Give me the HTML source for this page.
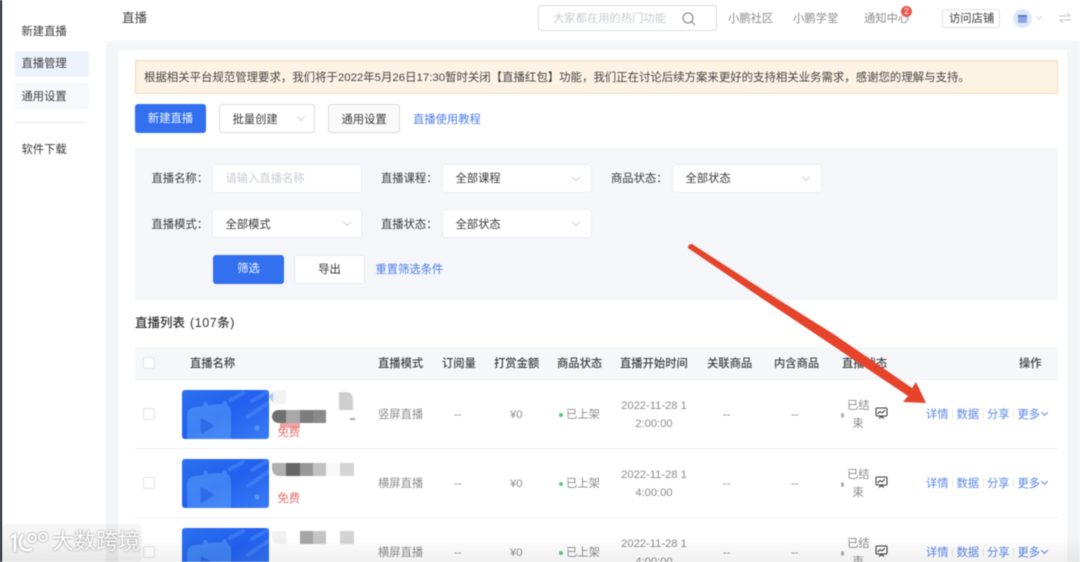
<!DOCTYPE html>
<html lang="zh"><head><meta charset="utf-8"><title>直播</title>
<style>
*{box-sizing:border-box}
html,body{margin:0;padding:0;background:#fff}
body{width:1080px;height:562px;overflow:hidden;position:relative;font-family:"Liberation Sans","Noto Sans CJK SC",sans-serif;font-size:11.3px;color:#555}
#p{position:absolute;left:0;top:0;width:1080px;height:562px;overflow:hidden;filter:blur(.4px)}
.a,.t{position:absolute}
.t{white-space:nowrap;line-height:16px;height:16px;margin-top:1px}
.b{color:#3a3a3a}.g{color:#8c8c8c}.l{color:#5b86e5}.ph{color:#c9ccd1}
.c{text-align:center}
.box{position:absolute;background:#fff;border:1px solid #e4e6ea;border-radius:3px}
.chev{position:absolute;width:6px;height:6px;border-right:1px solid #d0d3d8;border-bottom:1px solid #d0d3d8;transform:rotate(45deg)}
.cb{position:absolute;left:143px;width:12px;height:12px;border:1px solid #e1e3e6;border-radius:2px;background:#fff}
.row{position:absolute;left:135px;width:923px;height:69px;border-bottom:1px solid #eef0f2}
.r{position:absolute;left:0;width:1080px;height:69px}
.th{position:absolute;top:356px;font-weight:500;color:#3c3f44;white-space:nowrap;line-height:16px}
.s{position:absolute;background:#999}
</style></head><body><div id="p">

<!-- left edge + sidebar -->
<div class="a" style="left:0;top:0;width:2px;height:562px;background:#141929"></div>
<div class="a" style="left:106px;top:41px;width:974px;height:521px;background:#f4f5f6"></div>
<div class="a" style="left:118px;top:50px;width:940px;height:512px;background:#fff"></div>
<div class="a" style="left:1058px;top:50px;width:9px;height:512px;background:#fff"></div>

<div class="t b" style="left:21.5px;top:23px">新建直播</div>
<div class="a" style="left:15px;top:51px;width:74px;height:26px;background:#edf2fc;border-radius:3px"></div>
<div class="t b" style="left:21.5px;top:55px">直播管理</div>
<div class="a" style="left:15px;top:83px;width:74px;height:26px;background:#f7f9fd;border-radius:3px"></div>
<div class="t b" style="left:21.5px;top:88px">通用设置</div>
<div class="a" style="left:15px;top:122px;width:71px;height:1px;background:#e9eaec"></div>
<div class="t b" style="left:21.5px;top:141px">软件下载</div>

<!-- top bar -->
<div class="t" style="left:122px;top:9px;font-size:12.5px;color:#444">直播</div>
<div class="box" style="left:538px;top:5px;width:179px;height:26px;border-color:#d9dbdf"></div>
<div class="t ph" style="left:553px;top:10px">大家都在用的热门功能</div>
<svg class="a" style="left:681px;top:11px" width="16" height="16" viewBox="0 0 16 16" fill="none" stroke="#777" stroke-width="1"><circle cx="7" cy="7" r="5"/><path d="M10.8 10.8L14 14"/></svg>
<div class="t g" style="left:728px;top:10px">小鹏社区</div>
<div class="a" style="left:767px;top:14px;width:1px;height:9px;background:#e8e8e8"></div>
<div class="t g" style="left:793px;top:10px">小鹏学堂</div>
<div class="a" style="left:828px;top:14px;width:1px;height:9px;background:#e8e8e8"></div>
<div class="t g" style="left:864px;top:10px">通知中心</div>
<div class="a c" style="left:901px;top:6px;width:11px;height:11px;border-radius:50%;background:#e4574c;color:#fff;font-size:8.5px;line-height:11px">2</div>
<div class="box" style="left:942px;top:9px;width:58px;height:19px;border-color:#dfe1e4"></div>
<div class="t b" style="left:949px;top:10px">访问店铺</div>
<div class="a" style="left:1013px;top:9px;width:19px;height:19px;border-radius:50%;background:#dfe8fb"></div>
<div class="a" style="left:1018px;top:15px;width:9px;height:8px;background:#8aa8e8;border-radius:1px"></div>
<div class="a" style="left:1018px;top:15px;width:9px;height:2px;background:#5678c8"></div>
<div class="chev" style="left:1037px;top:15px;width:4px;height:4px"></div>
<svg class="a" style="left:1058px;top:11px" width="14" height="14" viewBox="0 0 14 14" fill="none" stroke="#c4c6ca"><path d="M1 5h11L9 2M13 9H2l3 3"/></svg>

<!-- notice -->
<div class="a" style="left:135px;top:60px;width:923px;height:34px;background:#fdf3e5;border:1px solid #f3d9b3;border-radius:2px"></div>
<div class="t" style="left:144px;top:69px;color:#444;font-size:11.42px">根据相关平台规范管理要求，我们将于2022年5月26日17:30暂时关闭【直播红包】功能，我们正在讨论后续方案来更好的支持相关业务需求，感谢您的理解与支持。</div>

<!-- action buttons -->
<div class="a c" style="left:135px;top:104px;width:71px;height:29px;background:#3270f0;border-radius:3px;color:#f4f7ff;line-height:30px">新建直播</div>
<div class="box" style="left:219px;top:104px;width:96px;height:29px;border-color:#d9dbdf"></div>
<div class="t b" style="left:232.5px;top:111px">批量创建</div>
<div class="chev" style="left:298px;top:114px"></div>
<div class="box" style="left:328px;top:104px;width:72px;height:29px;border-color:#d9dbdf;background:#fafafa"></div>
<div class="t b" style="left:341.5px;top:111px">通用设置</div>
<div class="t l" style="left:413px;top:111px;color:#4d7fe6">直播使用教程</div>

<!-- filter -->
<div class="a" style="left:135px;top:148px;width:923px;height:152px;background:#f4f6f9"></div>
<div class="t b" style="left:151.5px;top:170px">直播名称：</div>
<div class="box" style="left:212px;top:164px;width:150px;height:29px;border-color:#eceef1"></div>
<div class="t ph" style="left:225.5px;top:170px">请输入直播名称</div>
<div class="t b" style="left:381px;top:170px">直播课程：</div>
<div class="box" style="left:442px;top:164px;width:150px;height:29px;border-color:#eceef1"></div>
<div class="t b" style="left:455.5px;top:170px">全部课程</div>
<div class="chev" style="left:573px;top:174px"></div>
<div class="t b" style="left:611px;top:170px">商品状态：</div>
<div class="box" style="left:672px;top:164px;width:150px;height:29px;border-color:#eceef1"></div>
<div class="t b" style="left:685.5px;top:170px">全部状态</div>
<div class="chev" style="left:803px;top:174px"></div>

<div class="t b" style="left:151.5px;top:216px">直播模式：</div>
<div class="box" style="left:212px;top:209px;width:150px;height:29px;border-color:#eceef1"></div>
<div class="t b" style="left:225.5px;top:216px">全部模式</div>
<div class="chev" style="left:344px;top:219px"></div>
<div class="t b" style="left:381px;top:216px">直播状态：</div>
<div class="box" style="left:442px;top:209px;width:150px;height:29px;border-color:#eceef1"></div>
<div class="t b" style="left:455.5px;top:216px">全部状态</div>
<div class="chev" style="left:573px;top:219px"></div>

<div class="a c" style="left:213px;top:255px;width:71px;height:29px;background:#3270f0;border-radius:3px;color:#f4f7ff;line-height:29px">筛选</div>
<div class="box c" style="left:294px;top:255px;width:71px;height:29px;line-height:28px;color:#333;border-color:#e6e8eb">导出</div>
<div class="t l" style="left:375.5px;top:261px;color:#4d7fe6">重置筛选条件</div>

<div class="t" style="left:135px;top:314px;font-size:12.5px;color:#333;font-weight:500">直播列表<span style="margin-left:5px;letter-spacing:.55px">(107条)</span></div>

<!-- table header -->
<div class="a" style="left:135px;top:347px;width:923px;height:33px;background:#f6f7f9;border-bottom:1px solid #eef0f2"></div>
<div class="cb" style="top:357px"></div>
<div class="th" style="left:190px">直播名称</div>
<div class="th" style="left:378px">直播模式</div>
<div class="th" style="left:442px">订阅量</div>
<div class="th" style="left:494px">打赏金额</div>
<div class="th" style="left:557px">商品状态</div>
<div class="th" style="left:620px">直播开始时间</div>
<div class="th" style="left:707px">关联商品</div>
<div class="th" style="left:774px">内含商品</div>
<div class="th" style="left:842px">直播状态</div>
<div class="th" style="left:1019px">操作</div>

<!-- row 1 -->
<div class="r" style="top:380px">
  <div class="row" style="top:0"></div>
  <div class="cb" style="top:28px"></div>
  <svg class="a" style="left:182px;top:10px" width="87" height="49" viewBox="0 0 87 49"><defs><linearGradient id="g1" x1="0" y1="0" x2="1" y2="1"><stop offset="0" stop-color="#2b70ee"/><stop offset=".5" stop-color="#2260ef"/><stop offset="1" stop-color="#3a7cf5"/></linearGradient></defs><rect width="87" height="49" rx="3" fill="url(#g1)"/><path d="M5 49V26q0-8 8-9l8-1 1-4 3 0 1 3 14-1 2-3 3 1 0 3q4 1 4 9V49z" fill="#5a9ef7" opacity=".55"/><path d="M20 30l10 6-10 6z" fill="#2f6ae8" stroke="#2f6ae8" stroke-width="3" stroke-linejoin="round"/><path d="M48 10l13-7M70 11l15-9M66 27l20-14" stroke="#4a86f2" stroke-width="4" stroke-linecap="round" opacity=".6"/><circle cx="75" cy="38" r="2.5" fill="#5b97f5"/></svg>
  <div class="a" style="left:269px;top:10px;width:5px;height:14px;background:#a8c7f5;clip-path:polygon(100% 0,0 50%,100% 100%)"></div>
  <div class="s" style="left:273px;top:10px;width:13px;height:14px;background:#f3f3f3"></div>
  <div class="s" style="left:339px;top:12px;width:14px;height:18px;background:#cfcfcf;border-radius:0 7px 0 0"></div>
  <div class="s" style="left:272px;top:30px;width:14px;height:13px;background:#707070;border-radius:7px 0 0 7px"></div>
  <div class="s" style="left:286px;top:30px;width:14px;height:13px;background:#a8a8a8"></div>
  <div class="s" style="left:300px;top:30px;width:13px;height:13px;background:#7c7c7c"></div>
  <div class="s" style="left:313px;top:30px;width:13px;height:13px;background:#8a8a8a"></div>
  <div class="s" style="left:280px;top:43px;width:20px;height:5px;background:#eda5a5"></div>
  <div class="s" style="left:350px;top:38px;width:5px;height:2px;background:#aaa"></div>
  <div class="t" style="left:277.5px;top:44px;color:#e5706c">免费</div>
  <div class="t g" style="left:378px;top:26px">竖屏直播</div>
  <div class="t g" style="left:454px;top:26px">--</div>
  <div class="t g" style="left:510px;top:26px">¥0</div>
  <div class="a" style="left:559px;top:33px;width:4px;height:4px;border-radius:50%;background:#5cc77a"></div>
  <div class="t g" style="left:566px;top:26px">已上架</div>
  <div class="t g c" style="left:620px;top:17px;width:68px;font-size:11.2px">2022-11-28 1</div>
  <div class="t g c" style="left:620px;top:35px;width:68px;font-size:11.2px">2:00:00</div>
  <div class="t g" style="left:723px;top:26px">--</div>
  <div class="t g" style="left:791px;top:26px">--</div>
  <div class="a" style="left:841px;top:33px;width:3px;height:5px;border-radius:50%;background:#aaa"></div>
  <div class="t g" style="left:847px;top:17px">已结</div>
  <div class="t g" style="left:852.5px;top:35px">束</div>
  <svg class="a" style="left:875px;top:27px" width="13" height="13" viewBox="0 0 13 13" fill="none" stroke="#333" stroke-width="1"><rect x="1" y="1" width="11" height="8" rx="1"/><path d="M2.5 7l2.5-2.5 2 1.5 3-3M4 11.5q2.5-3 5 0"/></svg>
  <div class="t l" style="left:926px;top:26px">详情</div><div class="a" style="left:952px;top:30px;width:1px;height:8px;background:#e2e4e8"></div>
  <div class="t l" style="left:956.5px;top:26px">数据</div><div class="a" style="left:983px;top:30px;width:1px;height:8px;background:#e2e4e8"></div>
  <div class="t l" style="left:987px;top:26px">分享</div><div class="a" style="left:1013px;top:30px;width:1px;height:8px;background:#e2e4e8"></div>
  <div class="t l" style="left:1017.5px;top:26px">更多</div>
  <div class="chev" style="left:1042px;top:30px;width:5px;height:5px;border-color:#5b86e5"></div>
</div>

<!-- row 2 -->
<div class="r" style="top:449px">
  <div class="row" style="top:0"></div>
  <div class="cb" style="top:28px"></div>
  <svg class="a" style="left:182px;top:10px" width="87" height="49" viewBox="0 0 87 49"><defs><linearGradient id="g2" x1="0" y1="0" x2="1" y2="1"><stop offset="0" stop-color="#2b70ee"/><stop offset=".5" stop-color="#2260ef"/><stop offset="1" stop-color="#3a7cf5"/></linearGradient></defs><rect width="87" height="49" rx="3" fill="url(#g2)"/><path d="M5 49V26q0-8 8-9l8-1 1-4 3 0 1 3 14-1 2-3 3 1 0 3q4 1 4 9V49z" fill="#5a9ef7" opacity=".55"/><path d="M20 30l10 6-10 6z" fill="#2f6ae8" stroke="#2f6ae8" stroke-width="3" stroke-linejoin="round"/><path d="M48 10l13-7M70 11l15-9M66 27l20-14" stroke="#4a86f2" stroke-width="4" stroke-linecap="round" opacity=".6"/><circle cx="75" cy="38" r="2.5" fill="#5b97f5"/></svg>
  <div class="s" style="left:272px;top:14px;width:14px;height:13px;background:#b0b0b0;border-radius:0 0 0 7px"></div>
  <div class="s" style="left:286px;top:14px;width:14px;height:13px;background:#666"></div>
  <div class="s" style="left:300px;top:14px;width:13px;height:13px;background:#979797"></div>
  <div class="s" style="left:313px;top:14px;width:13px;height:13px;background:#c2c2c2"></div>
  <div class="s" style="left:326px;top:14px;width:14px;height:13px;background:#f8f8f8"></div>
  <div class="s" style="left:340px;top:14px;width:14px;height:13px;background:#d4d4d4"></div>
  <div class="t" style="left:277.5px;top:41px;color:#e5706c">免费</div>
  <div class="t g" style="left:378px;top:26px">横屏直播</div>
  <div class="t g" style="left:454px;top:26px">--</div>
  <div class="t g" style="left:510px;top:26px">¥0</div>
  <div class="a" style="left:559px;top:33px;width:4px;height:4px;border-radius:50%;background:#5cc77a"></div>
  <div class="t g" style="left:566px;top:26px">已上架</div>
  <div class="t g c" style="left:620px;top:17px;width:68px;font-size:11.2px">2022-11-28 1</div>
  <div class="t g c" style="left:620px;top:35px;width:68px;font-size:11.2px">4:00:00</div>
  <div class="t g" style="left:723px;top:26px">--</div>
  <div class="t g" style="left:791px;top:26px">--</div>
  <div class="a" style="left:841px;top:33px;width:3px;height:5px;border-radius:50%;background:#aaa"></div>
  <div class="t g" style="left:847px;top:17px">已结</div>
  <div class="t g" style="left:852.5px;top:35px">束</div>
  <svg class="a" style="left:875px;top:27px" width="13" height="13" viewBox="0 0 13 13" fill="none" stroke="#333" stroke-width="1"><rect x="1" y="1" width="11" height="8" rx="1"/><path d="M2.5 7l2.5-2.5 2 1.5 3-3M4 11.5q2.5-3 5 0"/></svg>
  <div class="t l" style="left:926px;top:26px">详情</div><div class="a" style="left:952px;top:30px;width:1px;height:8px;background:#e2e4e8"></div>
  <div class="t l" style="left:956.5px;top:26px">数据</div><div class="a" style="left:983px;top:30px;width:1px;height:8px;background:#e2e4e8"></div>
  <div class="t l" style="left:987px;top:26px">分享</div><div class="a" style="left:1013px;top:30px;width:1px;height:8px;background:#e2e4e8"></div>
  <div class="t l" style="left:1017.5px;top:26px">更多</div>
  <div class="chev" style="left:1042px;top:30px;width:5px;height:5px;border-color:#5b86e5"></div>
</div>

<!-- row 3 -->
<div class="r" style="top:518px">
  <div class="cb" style="top:28px"></div>
  <svg class="a" style="left:182px;top:10px" width="87" height="49" viewBox="0 0 87 49"><defs><linearGradient id="g3" x1="0" y1="0" x2="1" y2="1"><stop offset="0" stop-color="#2b70ee"/><stop offset=".5" stop-color="#2260ef"/><stop offset="1" stop-color="#3a7cf5"/></linearGradient></defs><rect width="87" height="49" rx="3" fill="url(#g3)"/><path d="M5 49V26q0-8 8-9l8-1 1-4 3 0 1 3 14-1 2-3 3 1 0 3q4 1 4 9V49z" fill="#5a9ef7" opacity=".55"/><path d="M20 30l10 6-10 6z" fill="#2f6ae8" stroke="#2f6ae8" stroke-width="3" stroke-linejoin="round"/><path d="M48 10l13-7M70 11l15-9M66 27l20-14" stroke="#4a86f2" stroke-width="4" stroke-linecap="round" opacity=".6"/><circle cx="75" cy="38" r="2.5" fill="#5b97f5"/></svg>
  <div class="s" style="left:272px;top:13px;width:14px;height:13px;background:#f1f1f1;border-radius:0 0 0 7px"></div>
  <div class="s" style="left:300px;top:13px;width:13px;height:13px;background:#a6a6a6"></div>
  <div class="s" style="left:313px;top:13px;width:13px;height:13px;background:#c6c6c6"></div>
  <div class="s" style="left:340px;top:13px;width:14px;height:13px;background:#d4d4d4"></div>
  <div class="t g" style="left:378px;top:26px">横屏直播</div>
  <div class="t g" style="left:454px;top:26px">--</div>
  <div class="t g" style="left:510px;top:26px">¥0</div>
  <div class="a" style="left:559px;top:33px;width:4px;height:4px;border-radius:50%;background:#5cc77a"></div>
  <div class="t g" style="left:566px;top:26px">已上架</div>
  <div class="t g c" style="left:620px;top:17px;width:68px;font-size:11.2px">2022-11-28 1</div>
  <div class="t g c" style="left:620px;top:35px;width:68px;font-size:11.2px">4:00:00</div>
  <div class="t g" style="left:723px;top:26px">--</div>
  <div class="t g" style="left:791px;top:26px">--</div>
  <div class="a" style="left:841px;top:33px;width:3px;height:5px;border-radius:50%;background:#aaa"></div>
  <div class="t g" style="left:847px;top:17px">已结</div>
  <div class="t g" style="left:852.5px;top:35px">束</div>
  <svg class="a" style="left:875px;top:27px" width="13" height="13" viewBox="0 0 13 13" fill="none" stroke="#333" stroke-width="1"><rect x="1" y="1" width="11" height="8" rx="1"/><path d="M2.5 7l2.5-2.5 2 1.5 3-3M4 11.5q2.5-3 5 0"/></svg>
  <div class="t l" style="left:926px;top:26px">详情</div><div class="a" style="left:952px;top:30px;width:1px;height:8px;background:#e2e4e8"></div>
  <div class="t l" style="left:956.5px;top:26px">数据</div><div class="a" style="left:983px;top:30px;width:1px;height:8px;background:#e2e4e8"></div>
  <div class="t l" style="left:987px;top:26px">分享</div><div class="a" style="left:1013px;top:30px;width:1px;height:8px;background:#e2e4e8"></div>
  <div class="t l" style="left:1017.5px;top:26px">更多</div>
  <div class="chev" style="left:1042px;top:30px;width:5px;height:5px;border-color:#5b86e5"></div>
</div>

<!-- bottom shade -->
<div class="a" style="left:0;top:535px;width:1080px;height:27px;background:linear-gradient(rgba(0,0,0,0),rgba(0,0,0,.06))"></div>
<div class="a" style="left:2px;top:524px;width:140px;height:38px;background:rgba(0,0,0,.04);border-radius:4px"></div>

<!-- arrow -->
<svg class="a" style="left:0;top:0" width="1080" height="562" viewBox="0 0 1080 562"><path d="M692 244L760 288 835 335 912 388 916 382 926 403 903 402 908 396 820 337 760 297 688 248Q688 244 692 244Z" fill="#e5432a"/></svg>

<!-- watermark -->
<svg class="a" style="left:8px;top:528px;filter:drop-shadow(0 0 1px #777)" width="44" height="28" viewBox="0 0 44 28" fill="none" stroke="#fff" stroke-width="2.6"><path d="M3 10L7 7V24M15 6q-5 7-2 13 4 5 11 2"/><circle cx="24" cy="10" r="4" stroke-width="2"/><circle cx="35" cy="9" r="4" stroke-width="1.8"/></svg>
<div class="t" style="left:52px;top:529px;height:24px;line-height:24px;font-size:22px;color:#fff;text-shadow:0 0 2px rgba(100,100,100,.85)">大数跨境</div>

</div></body></html>
